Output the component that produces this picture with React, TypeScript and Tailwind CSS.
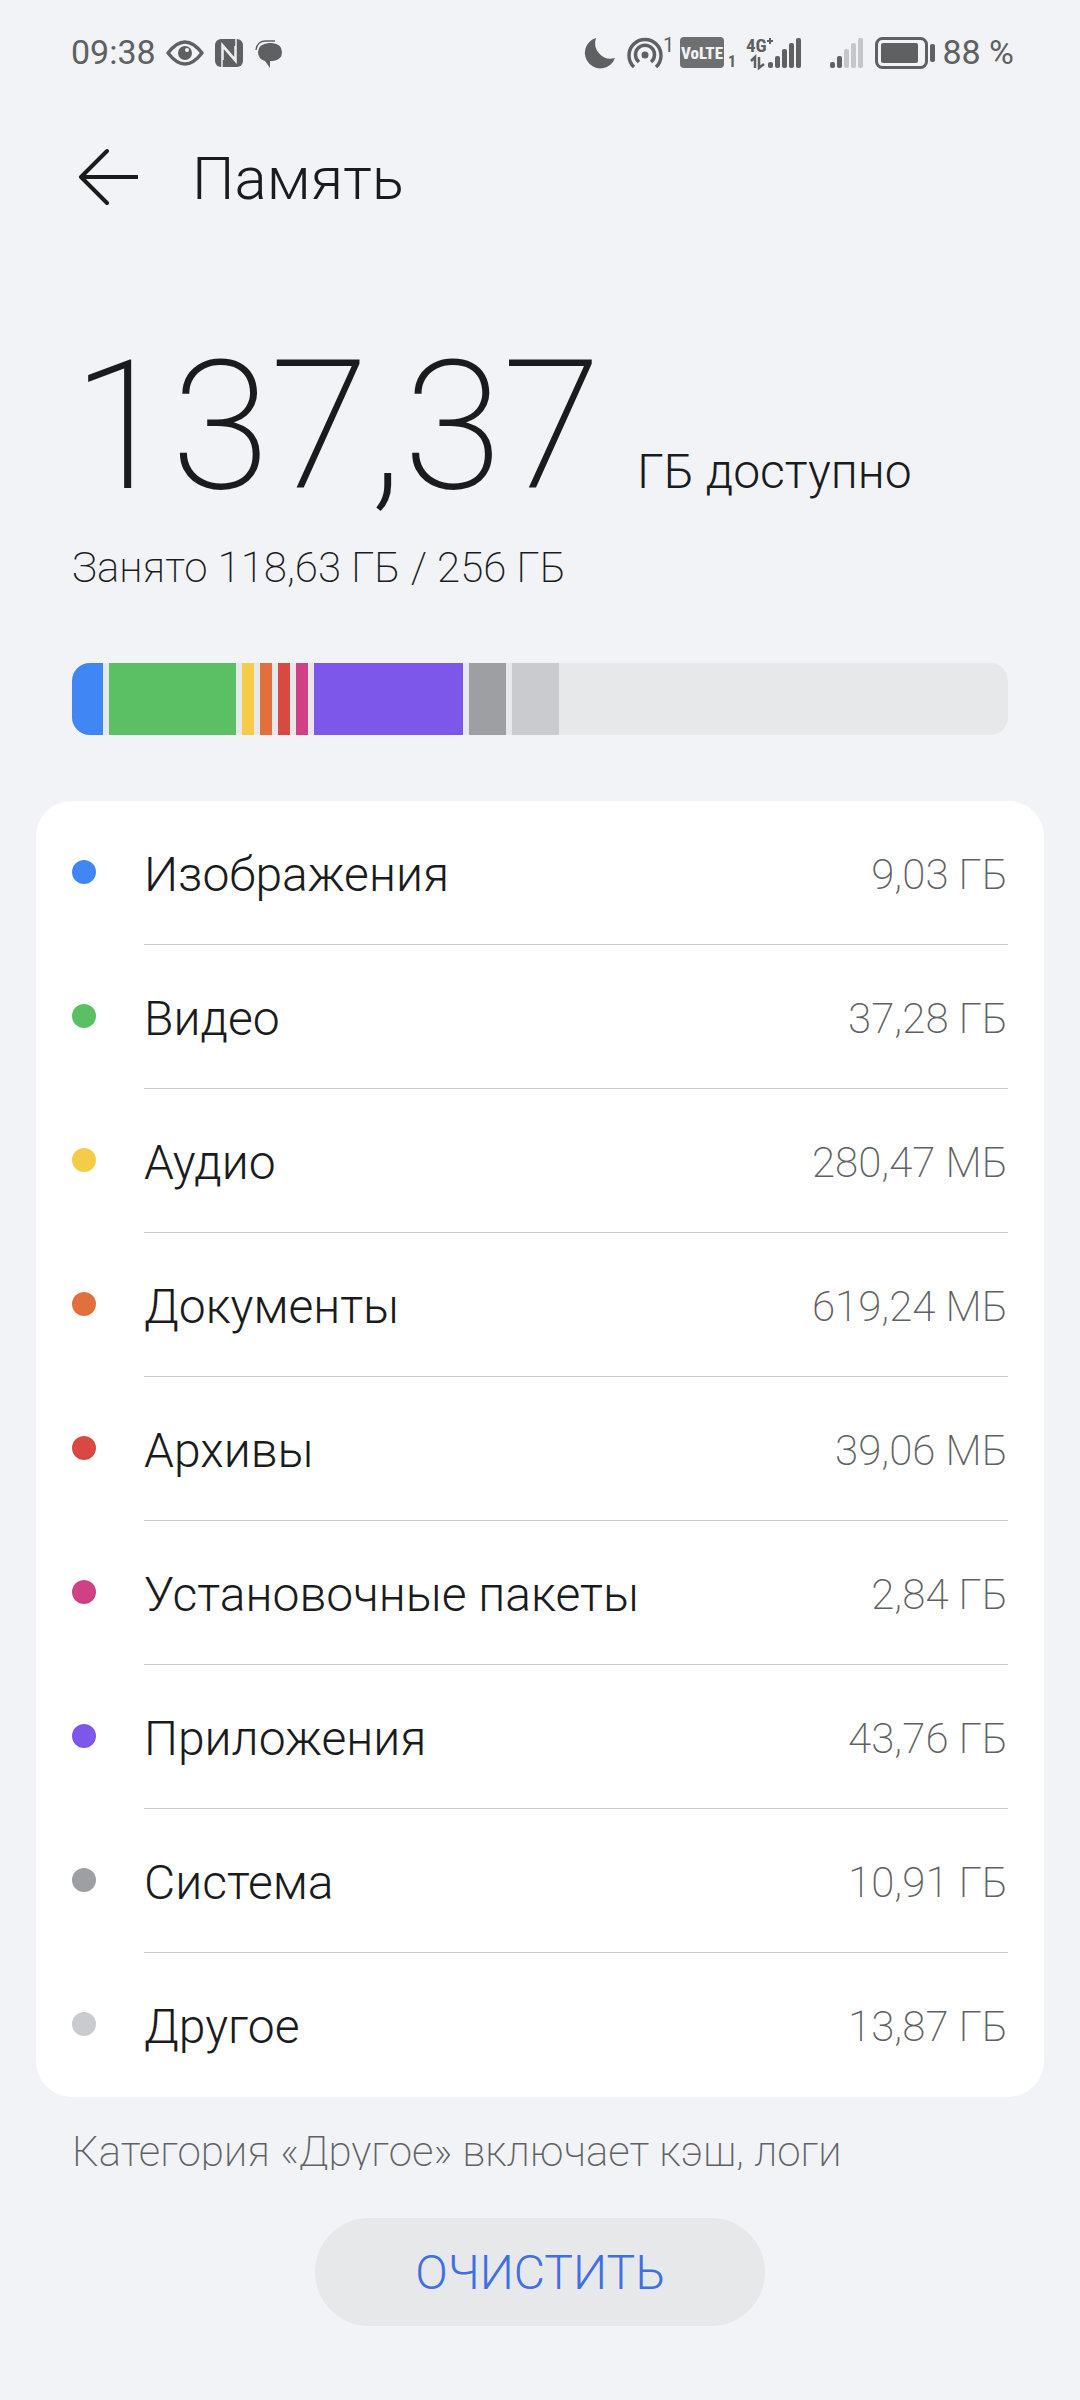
import type { ReactNode } from 'react';

interface Category {
  name: string;
  size: string;
  color: string;
  weight: number;
}

// weight = share of the usage bar, tiny categories get a minimum of 12
const CATEGORIES: Category[] = [
  { name: 'Изображения', size: '9,03 ГБ', color: '#4086f5', weight: 31 },
  { name: 'Видео', size: '37,28 ГБ', color: '#5bc064', weight: 127 },
  { name: 'Аудио', size: '280,47 МБ', color: '#f5cc47', weight: 12 },
  { name: 'Документы', size: '619,24 МБ', color: '#e2703d', weight: 12 },
  { name: 'Архивы', size: '39,06 МБ', color: '#d84a41', weight: 12 },
  { name: 'Установочные пакеты', size: '2,84 ГБ', color: '#d04084', weight: 12 },
  { name: 'Приложения', size: '43,76 ГБ', color: '#7d57ea', weight: 149 },
  { name: 'Система', size: '10,91 ГБ', color: '#9e9fa3', weight: 37 },
  { name: 'Другое', size: '13,87 ГБ', color: '#cacbcf', weight: 47 },
];

const FREE_WEIGHT = 443;

function Icon({ w, className = '', children }: { w: number; className?: string; children: ReactNode }) {
  return (
    <svg width={w} height="32" viewBox={`0 0 ${w} 32`} fill="currentColor" aria-hidden="true" className={`shrink-0 overflow-visible ${className}`}>
      {children}
    </svg>
  );
}

function SignalBars({ active }: { active: number }) {
  const heights = [6, 12, 19, 25, 30];
  return (
    <>
      {heights.map((h, i) => (
        <rect key={h} x={i * 7} y={31 - h} width="5" height={h} rx="2" opacity={i < active ? 1 : 0.3} />
      ))}
    </>
  );
}

function StatusBar() {
  return (
    <div className="flex h-[104px] items-center justify-between pl-[71px] pr-[66px] text-[34px] font-normal text-[#5f6062]">
      <div className="flex items-center pt-px">
        <span>09:38</span>
        <Icon w={38} className="ml-[10px]">
          <path d="M2 16 Q19 -6 36 16 Q19 38 2 16Z" fill="none" stroke="currentColor" strokeWidth="3.5" strokeLinejoin="round" />
          <circle cx="19" cy="16" r="7" />
          <circle cx="21" cy="13" r="2" fill="#f1f3f7" />
        </Icon>
        <Icon w={28} className="ml-[11px]">
          <rect y="2" width="28" height="28" rx="6" />
          <path d="M7 31 V7 L20 22 V9" fill="none" stroke="#f1f3f7" strokeWidth="1.5" />
          <path d="M21 1 V25 L8 10 V23" fill="none" stroke="#f1f3f7" strokeWidth="1.5" />
        </Icon>
        <Icon w={27} className="ml-3">
          <path d="M14 6 H17 Q27 7 27 15 Q27 23 18 24 H15 V31 L10 24 Q3 22 3 15 Q3 7 14 6Z" />
          <path d="M1 13 Q2 4 11 4 H20" fill="none" stroke="currentColor" strokeWidth="1.3" />
        </Icon>
      </div>

      <div className="flex items-center pt-px">
        <Icon w={30}>
          <path d="M11 1 A15.5 15.5 0 1 0 30 21 A15.5 15.5 0 0 1 11 1Z" />
        </Icon>
        <Icon w={46} className="ml-3">
          <g fill="none" stroke="currentColor" strokeWidth="3.5">
            <path d="M7 30 A16 16 0 1 1 29 30" />
            <path d="M12 25 A9.5 9.5 0 1 1 24 25" />
          </g>
          <circle cx="18" cy="18" r="3.5" />
          <text x="36" y="15" fontSize="20">1</text>
        </Icon>
        <Icon w={56} className="ml-[7px] font-['Roboto_Condensed',Roboto,sans-serif]">
          <rect width="44" height="31" rx="4" opacity="0.9" />
          <text x="22" y="22" fontSize="17" fontWeight="800" fill="#f1f3f7" textAnchor="middle">VoLTE</text>
          <text x="48" y="30" fontSize="16" fontWeight="700">1</text>
        </Icon>
        <Icon w={57} className="ml-[10px] font-['Roboto_Condensed',Roboto,sans-serif]">
          <text x="0" y="15" fontSize="19" fontWeight="700">4G</text>
          <path d="M24 1 V7 M21 4 H27" stroke="currentColor" strokeWidth="2" />
          <path d="M5 24 L9 20 V31 M13 20 V31 L18 27" fill="none" stroke="currentColor" strokeWidth="2.5" />
          <g transform="translate(22 0)">
            <SignalBars active={5} />
          </g>
        </Icon>
        <Icon w={33} className="ml-[27px]">
          <SignalBars active={2} />
        </Icon>
        <Icon w={60} className="ml-3">
          <rect x="1.5" y="1.5" width="50" height="29" rx="6" fill="none" stroke="currentColor" strokeWidth="3" />
          <rect x="6" y="6" width="37" height="20" rx="2" />
          <rect x="55" y="7" width="5" height="18" rx="2" />
        </Icon>
        <span className="ml-[7px]">88 %</span>
      </div>
    </div>
  );
}

export default function App() {
  return (
    <div className="flex h-screen flex-col bg-[#f1f3f7] font-[Roboto,sans-serif] font-light text-[#1a1b1c]">
      <StatusBar />

      <header className="flex h-[146px] items-center px-[72px]">
        <button type="button" aria-label="Назад" className="flex h-[72px] w-[72px] shrink-0 items-center justify-center">
          <svg width="60" height="58" viewBox="0 0 60 58" fill="none" stroke="currentColor" strokeWidth="4" strokeLinecap="round" strokeLinejoin="round">
            <path d="M29 3 L3 29 L29 55 M4 29 H59" />
          </svg>
        </button>
        <h1 className="ml-12 pt-1 text-[60px] leading-[72px]">Память</h1>
      </header>

      <main className="min-h-0 flex-1 overflow-hidden px-9">
        <section className="px-9 pt-[87px]">
          <div className="flex items-baseline gap-9">
            <span className="text-[180px] leading-none font-extralight">137,37</span>
            <span className="text-[48px]">ГБ доступно</span>
          </div>
          <p className="mt-[27px] text-[42px] leading-[48px] font-extralight">Занято 118,63 ГБ / 256 ГБ</p>

          <div className="mt-[71px] flex h-[72px] gap-[6px] overflow-hidden rounded-[18px] bg-[#e7e8ea]">
            {CATEGORIES.map(c => (
              <div key={c.name} className="basis-0" style={{ flexGrow: c.weight, backgroundColor: c.color }} />
            ))}
            <div className="basis-0" style={{ flexGrow: FREE_WEIGHT }} />
          </div>
        </section>

        <ul className="mt-[66px] rounded-[36px] bg-white px-9">
          {CATEGORIES.map(c => (
            <li key={c.name} className="group flex h-36 items-center">
              <span className="mr-12 mb-[2px] h-6 w-6 shrink-0 rounded-full" style={{ backgroundColor: c.color }} />
              <div className="flex h-full flex-1 items-center justify-between border-b border-[#c8c8c8] pt-1 group-last:border-b-0">
                <span className="text-[48px] leading-[56px]">{c.name}</span>
                <span className="text-[42px] leading-[48px] font-extralight text-[#606163]">{c.size}</span>
              </div>
            </li>
          ))}
        </ul>

        <p className="mt-[31px] px-9 text-[42px] leading-[48px] font-extralight text-[#606163]">
          Категория «Другое» включает кэш, логи
        </p>
      </main>

      <footer className="flex justify-center pt-12 pb-[74px]">
        <button type="button" className="h-[108px] w-[450px] rounded-full bg-[#e7e8ea] pt-[2px] text-[48px] text-[#3f6fe4]">
          ОЧИСТИТЬ
        </button>
      </footer>
    </div>
  );
}
